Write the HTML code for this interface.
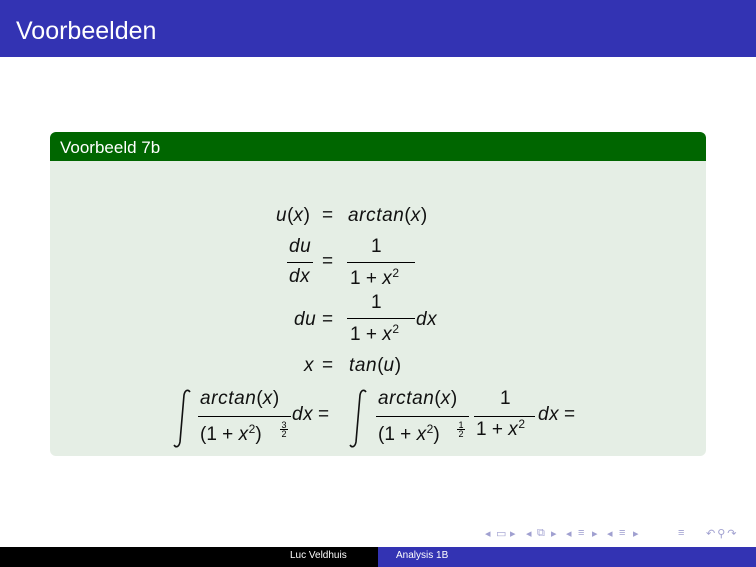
<!DOCTYPE html>
<html><head><meta charset="utf-8"><style>
body{margin:0;width:756px;height:567px;background:#fff;position:relative;overflow:hidden;font-family:"Liberation Sans",sans-serif}
.a{position:absolute;white-space:nowrap}
.m{position:absolute;white-space:nowrap;font-size:19px;color:#111;line-height:22px}
i{font-style:italic;letter-spacing:0.6px}
sup{font-size:12px;vertical-align:7px;line-height:0}
.fr{position:absolute;border-top:1px solid #000;height:0}
.e{position:absolute;font-size:9px;line-height:9px;text-align:center;width:8px}
.e b{display:block;font-weight:normal;border-bottom:1px solid #000;line-height:8px}
.n{position:absolute;top:527px;font-size:11px;color:#a0a0d0}
</style></head><body>
<div class="a" style="left:0;top:0;width:756px;height:57px;background:#3333b3"></div>
<div class="a" style="left:16px;top:17px;font-size:25px;color:#fff">Voorbeelden</div>
<div class="a" style="left:50px;top:132px;width:656px;height:29px;background:#006600;border-radius:6px 6px 0 0"></div>
<div class="a" style="left:60px;top:138px;font-size:17px;color:#fff">Voorbeeld 7b</div>
<div class="a" style="left:50px;top:161px;width:656px;height:295px;background:#e5eee5;border-radius:0 0 6px 6px"></div>

<!-- line 1 -->
<div class="m" style="left:276px;top:205px"><i>u</i>(<i>x</i>)</div>
<div class="m" style="left:322px;top:205px">=</div>
<div class="m" style="left:348px;top:205px"><i>arctan</i>(<i>x</i>)</div>
<!-- line 2 -->
<div class="m" style="left:289px;top:236px"><i>du</i></div>
<div class="fr" style="left:287px;top:262px;width:26px"></div>
<div class="m" style="left:289px;top:266px"><i>dx</i></div>
<div class="m" style="left:322px;top:251px">=</div>
<div class="m" style="left:371px;top:236px">1</div>
<div class="fr" style="left:347px;top:262px;width:68px"></div>
<div class="m" style="left:350px;top:268px">1 + <i>x</i><sup>2</sup></div>
<!-- line 3 -->
<div class="m" style="left:294px;top:309px"><i>du</i></div>
<div class="m" style="left:322px;top:309px">=</div>
<div class="m" style="left:371px;top:292px">1</div>
<div class="fr" style="left:347px;top:318px;width:68px"></div>
<div class="m" style="left:350px;top:324px">1 + <i>x</i><sup>2</sup></div>
<div class="m" style="left:416px;top:309px"><i>dx</i></div>
<!-- line 4 -->
<div class="m" style="left:304px;top:355px"><i>x</i></div>
<div class="m" style="left:322px;top:355px">=</div>
<div class="m" style="left:349px;top:355px"><i>tan</i>(<i>u</i>)</div>
<!-- line 5 -->
<svg class="a" style="left:170px;top:388px" width="24" height="62"><path d="M20 4 C18 1,15 2,14 7 L10 54 C9 59,6 60,4 57" fill="none" stroke="#111" stroke-width="1.6"/></svg>
<div class="m" style="left:200px;top:388px"><i>arctan</i>(<i>x</i>)</div>
<div class="fr" style="left:198px;top:416px;width:93px"></div>
<div class="m" style="left:200px;top:424px">(1 + <i>x</i><sup>2</sup>)</div>
<div class="e" style="left:280px;top:421px"><b>3</b>2</div>
<div class="m" style="left:292px;top:404px"><i>dx</i></div>
<div class="m" style="left:318px;top:404px">=</div>
<svg class="a" style="left:346px;top:388px" width="24" height="62"><path d="M20 4 C18 1,15 2,14 7 L10 54 C9 59,6 60,4 57" fill="none" stroke="#111" stroke-width="1.6"/></svg>
<div class="m" style="left:378px;top:388px"><i>arctan</i>(<i>x</i>)</div>
<div class="fr" style="left:376px;top:416px;width:93px"></div>
<div class="m" style="left:378px;top:424px">(1 + <i>x</i><sup>2</sup>)</div>
<div class="e" style="left:457px;top:421px"><b>1</b>2</div>
<div class="m" style="left:500px;top:388px">1</div>
<div class="fr" style="left:474px;top:416px;width:61px"></div>
<div class="m" style="left:476px;top:419px">1 + <i>x</i><sup>2</sup></div>
<div class="m" style="left:538px;top:404px"><i>dx</i></div>
<div class="m" style="left:564px;top:404px">=</div>

<div class="n" style="left:485px">◂</div><div class="n" style="left:496px">▭</div><div class="n" style="left:510px">▸</div>
<div class="n" style="left:526px">◂</div><div class="n" style="left:537px">⧉</div><div class="n" style="left:551px">▸</div>
<div class="n" style="left:566px">◂</div><div class="n" style="left:578px">≡</div><div class="n" style="left:592px">▸</div>
<div class="n" style="left:607px">◂</div><div class="n" style="left:619px">≡</div><div class="n" style="left:633px">▸</div>
<div class="n" style="left:678px">≡</div>
<div class="n" style="left:706px;letter-spacing:2px">↶⚲↷</div>
<div class="a" style="left:0;top:547px;width:378px;height:20px;background:#000"></div>
<div class="a" style="left:378px;top:547px;width:378px;height:20px;background:#3333b3"></div>
<div class="a" style="left:290px;top:550px;font-size:10px;color:#fff">Luc Veldhuis</div>
<div class="a" style="left:396px;top:550px;font-size:10px;color:#fff">Analysis 1B</div>
</body></html>
